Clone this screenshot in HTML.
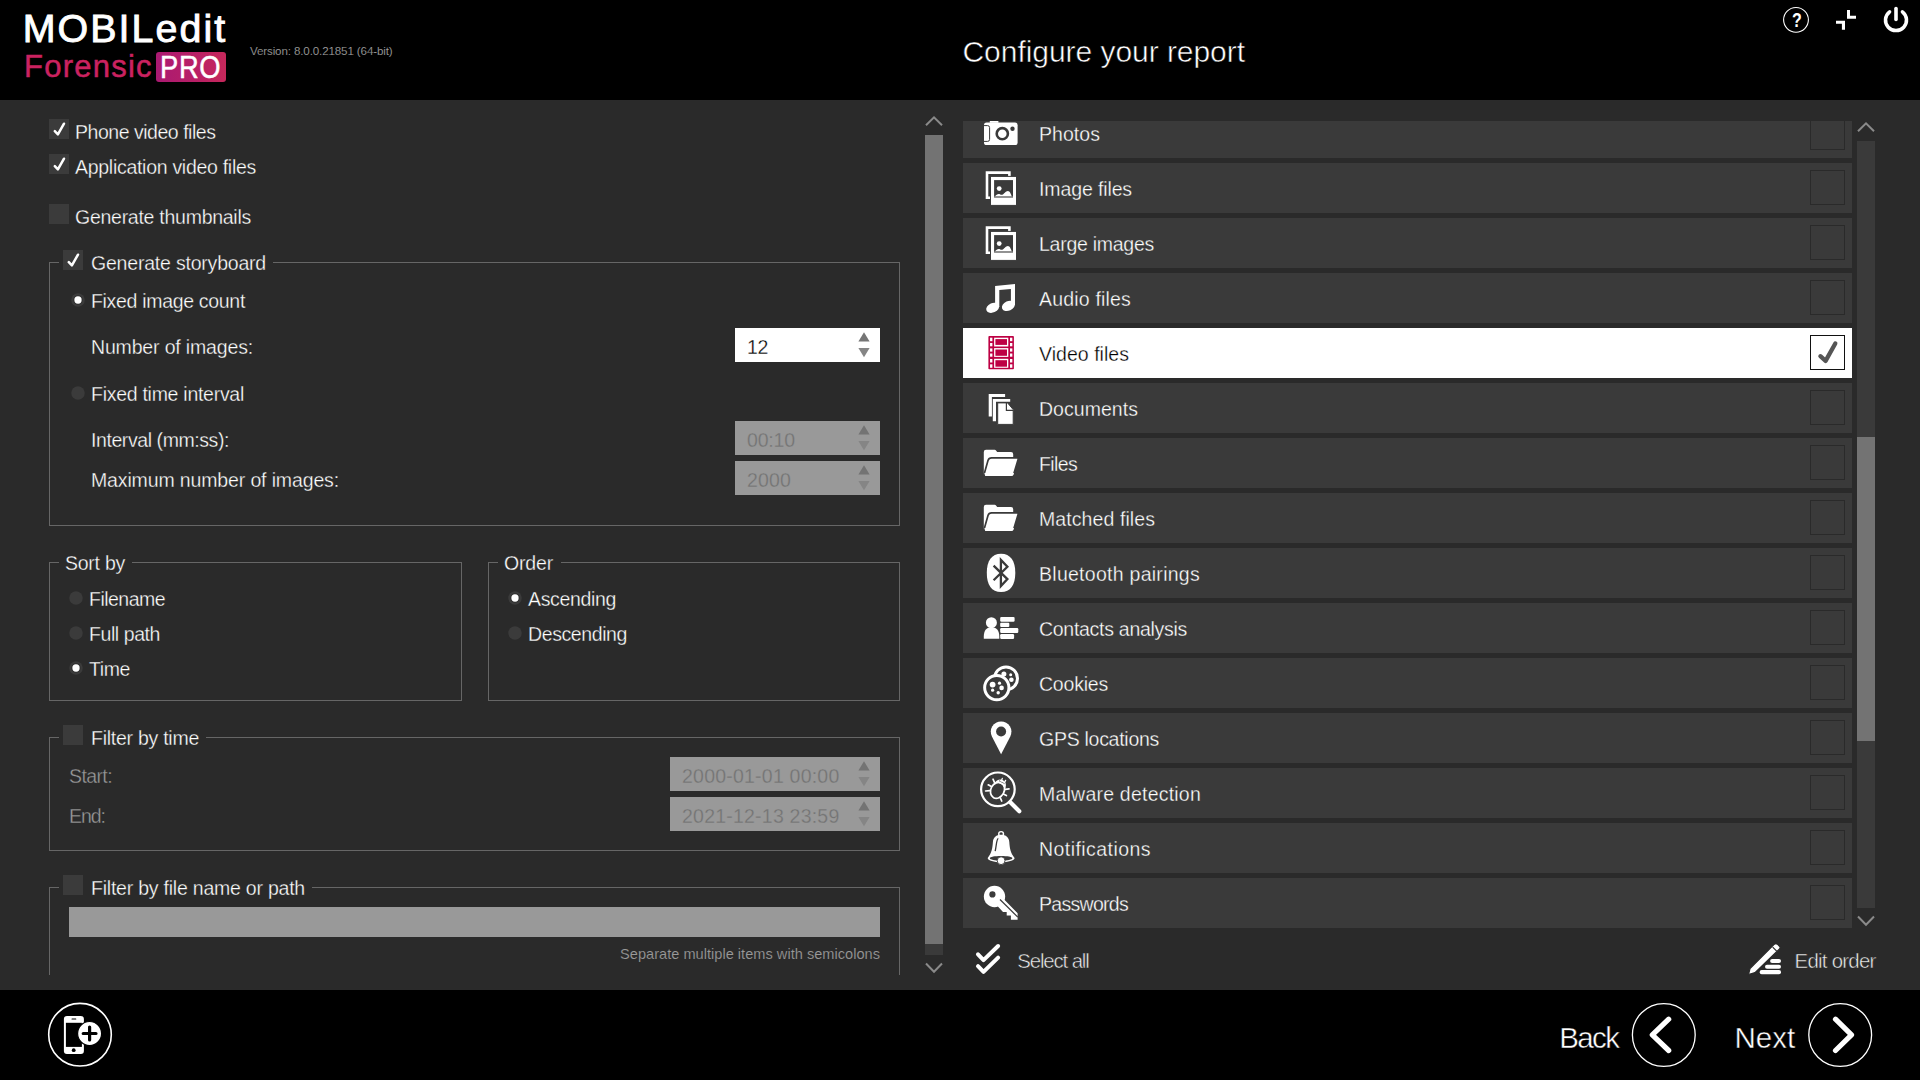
<!DOCTYPE html>
<html lang="en">
<head>
<meta charset="utf-8">
<title>MOBILedit Forensic PRO - Configure your report</title>
<style>
html,body{margin:0;padding:0;}
body{width:1920px;height:1080px;overflow:hidden;background:#2a2a2a;position:relative;font-family:"Liberation Sans",sans-serif;}
.a{position:absolute;}
.t{position:absolute;white-space:nowrap;font-family:"Liberation Sans",sans-serif;}
.hdr{left:0;top:0;width:1920px;height:100px;background:#000;}
.ftr{left:0;top:990px;width:1920px;height:90px;background:#000;}
.cb{width:20px;height:20px;background:#3b3b3b;}
.grp{border:1px solid #666;box-sizing:border-box;}
.gap{background:#2a2a2a;height:3px;}
.sp{background:#fff;}
.sp.dis{background:#999;}
.row{left:963px;width:889px;height:50px;background:#3a3a3a;}
.row.sel{background:#fff;}
.rcb{left:1810px;width:35px;height:35px;box-sizing:border-box;border:1px solid #2a2a2a;}
.rcb.sel{border-color:#111;}
svg{position:absolute;overflow:visible;}
</style>
</head>
<body>
<div class="a hdr"></div>
<div class="a ftr"></div>
<div class="a cb" style="left:49px;top:119px;"></div>
<svg style="left:49px;top:119px" width="20" height="20" viewBox="0 0 20 20"><path d="M5.8 12.2 L8.9 15.4 L15 4.7" fill="none" stroke="#fff" stroke-width="2.5" stroke-linecap="round" stroke-linejoin="round"/></svg>
<div class="a cb" style="left:49px;top:154px;"></div>
<svg style="left:49px;top:154px" width="20" height="20" viewBox="0 0 20 20"><path d="M5.8 12.2 L8.9 15.4 L15 4.7" fill="none" stroke="#fff" stroke-width="2.5" stroke-linecap="round" stroke-linejoin="round"/></svg>
<div class="a cb" style="left:49px;top:204px;"></div>
<div class="a grp" style="left:49px;top:262px;width:851px;height:264px;"></div>
<div class="a gap" style="left:59px;top:261px;width:214px;"></div>
<div class="a cb" style="left:63px;top:250px;"></div>
<svg style="left:63px;top:250px" width="20" height="20" viewBox="0 0 20 20"><path d="M5.8 12.2 L8.9 15.4 L15 4.7" fill="none" stroke="#fff" stroke-width="2.5" stroke-linecap="round" stroke-linejoin="round"/></svg>
<svg style="left:70px;top:292px" width="16" height="16" viewBox="0 0 16 16"><circle cx="8" cy="8" r="6.75" fill="#3b3b3b"/><circle cx="8" cy="8" r="4.7" fill="#303030"/><circle cx="8" cy="8" r="3.65" fill="#fff"/></svg>
<svg style="left:70px;top:385px" width="16" height="16" viewBox="0 0 16 16"><circle cx="8" cy="8" r="6.75" fill="#3b3b3b"/></svg>
<div class="a sp" style="left:735px;top:328px;width:145px;height:34px;"></div>
<svg style="left:858.4px;top:332px" width="12" height="26" viewBox="0 0 12 26"><path d="M6 0.2 L11.6 9.6 L0.4 9.6 Z" fill="#757575"/><path d="M0.4 15.9 L11.6 15.9 L6 25.3 Z" fill="#858585"/></svg>
<div class="a sp dis" style="left:735px;top:421px;width:145px;height:34px;"></div>
<svg style="left:858.4px;top:425px" width="12" height="26" viewBox="0 0 12 26"><path d="M6 0.2 L11.6 9.6 L0.4 9.6 Z" fill="#737373"/><path d="M0.4 15.9 L11.6 15.9 L6 25.3 Z" fill="#858585"/></svg>
<div class="a sp dis" style="left:735px;top:461px;width:145px;height:34px;"></div>
<svg style="left:858.4px;top:465px" width="12" height="26" viewBox="0 0 12 26"><path d="M6 0.2 L11.6 9.6 L0.4 9.6 Z" fill="#737373"/><path d="M0.4 15.9 L11.6 15.9 L6 25.3 Z" fill="#858585"/></svg>
<div class="a grp" style="left:49px;top:562px;width:413px;height:139px;"></div>
<div class="a gap" style="left:59px;top:561px;width:73px;"></div>
<svg style="left:68px;top:590px" width="16" height="16" viewBox="0 0 16 16"><circle cx="8" cy="8" r="6.75" fill="#3b3b3b"/></svg>
<svg style="left:68px;top:625px" width="16" height="16" viewBox="0 0 16 16"><circle cx="8" cy="8" r="6.75" fill="#3b3b3b"/></svg>
<svg style="left:68px;top:660px" width="16" height="16" viewBox="0 0 16 16"><circle cx="8" cy="8" r="6.75" fill="#3b3b3b"/><circle cx="8" cy="8" r="4.7" fill="#303030"/><circle cx="8" cy="8" r="3.65" fill="#fff"/></svg>
<div class="a grp" style="left:488px;top:562px;width:412px;height:139px;"></div>
<div class="a gap" style="left:498px;top:561px;width:63px;"></div>
<svg style="left:507px;top:590px" width="16" height="16" viewBox="0 0 16 16"><circle cx="8" cy="8" r="6.75" fill="#3b3b3b"/><circle cx="8" cy="8" r="4.7" fill="#303030"/><circle cx="8" cy="8" r="3.65" fill="#fff"/></svg>
<svg style="left:507px;top:625px" width="16" height="16" viewBox="0 0 16 16"><circle cx="8" cy="8" r="6.75" fill="#3b3b3b"/></svg>
<div class="a grp" style="left:49px;top:737px;width:851px;height:114px;"></div>
<div class="a gap" style="left:59px;top:736px;width:147px;"></div>
<div class="a cb" style="left:63px;top:725px;"></div>
<div class="a sp dis" style="left:670px;top:757px;width:210px;height:34px;"></div>
<svg style="left:858.4px;top:761px" width="12" height="26" viewBox="0 0 12 26"><path d="M6 0.2 L11.6 9.6 L0.4 9.6 Z" fill="#737373"/><path d="M0.4 15.9 L11.6 15.9 L6 25.3 Z" fill="#858585"/></svg>
<div class="a sp dis" style="left:670px;top:797px;width:210px;height:34px;"></div>
<svg style="left:858.4px;top:801px" width="12" height="26" viewBox="0 0 12 26"><path d="M6 0.2 L11.6 9.6 L0.4 9.6 Z" fill="#737373"/><path d="M0.4 15.9 L11.6 15.9 L6 25.3 Z" fill="#858585"/></svg>
<div class="a grp" style="left:49px;top:887px;width:851px;height:100px;border-bottom:none;height:88px;"></div>
<div class="a gap" style="left:59px;top:886px;width:253px;"></div>
<div class="a cb" style="left:63px;top:875px;"></div>
<div class="a sp dis" style="left:69px;top:907px;width:811px;height:30px;"></div>
<div class="a " style="left:925px;top:135px;width:18px;height:820px;background:#3a3a3a;"></div>
<div class="a " style="left:925px;top:135px;width:18px;height:809px;background:#737373;"></div>
<svg style="left:925px;top:116px" width="18" height="10" viewBox="0 0 18 10"><path d="M1 9.3 L9 1.3 L17 9.3" fill="none" stroke="#8a8a8a" stroke-width="2"/></svg>
<svg style="left:925px;top:962px" width="18" height="10" viewBox="0 0 18 10"><path d="M1 1.5 L9 9.7 L17 1.5" fill="none" stroke="#8a8a8a" stroke-width="2"/></svg>
<div class="a" style="left:963px;top:121px;width:889px;height:807px;overflow:hidden;">
<div class="a row" style="left:0;top:-13px"></div>
<div class="a rcb" style="left:847px;top:-6px"></div>
<div class="a row" style="left:0;top:42px"></div>
<div class="a rcb" style="left:847px;top:49px"></div>
<div class="a row" style="left:0;top:97px"></div>
<div class="a rcb" style="left:847px;top:104px"></div>
<div class="a row" style="left:0;top:152px"></div>
<div class="a rcb" style="left:847px;top:159px"></div>
<div class="a row sel" style="left:0;top:207px"></div>
<div class="a rcb sel" style="left:847px;top:214px"></div>
<div class="a row" style="left:0;top:262px"></div>
<div class="a rcb" style="left:847px;top:269px"></div>
<div class="a row" style="left:0;top:317px"></div>
<div class="a rcb" style="left:847px;top:324px"></div>
<div class="a row" style="left:0;top:372px"></div>
<div class="a rcb" style="left:847px;top:379px"></div>
<div class="a row" style="left:0;top:427px"></div>
<div class="a rcb" style="left:847px;top:434px"></div>
<div class="a row" style="left:0;top:482px"></div>
<div class="a rcb" style="left:847px;top:489px"></div>
<div class="a row" style="left:0;top:537px"></div>
<div class="a rcb" style="left:847px;top:544px"></div>
<div class="a row" style="left:0;top:592px"></div>
<div class="a rcb" style="left:847px;top:599px"></div>
<div class="a row" style="left:0;top:647px"></div>
<div class="a rcb" style="left:847px;top:654px"></div>
<div class="a row" style="left:0;top:702px"></div>
<div class="a rcb" style="left:847px;top:709px"></div>
<div class="a row" style="left:0;top:757px"></div>
<div class="a rcb" style="left:847px;top:764px"></div>
<svg style="left:9px;top:-13px" width="60" height="50" viewBox="0 0 60 50"><path d="M17.8 12.4 h8.6 v2.4 h-8.6z" fill="#fff"/>
<rect x="12" y="14.6" width="33.6" height="22.4" rx="2.6" fill="#fff"/>
<rect x="9" y="17.6" width="8.6" height="15.8" rx="2" fill="#fff" stroke="#3a3a3a" stroke-width="1"/>
<rect x="8" y="14.6" width="4" height="22.4" fill="#3a3a3a"/>
<circle cx="30.3" cy="25.7" r="5.6" fill="none" stroke="#3a3a3a" stroke-width="2.6"/>
<circle cx="40.5" cy="20.8" r="2.2" fill="#3a3a3a"/></svg>
<svg style="left:9px;top:42px" width="60" height="50" viewBox="0 0 60 50"><path d="M15 9.6 H37.4 V14 M15 9.6 V34.8 H19" fill="none" stroke="#fff" stroke-width="2.6" stroke-linecap="square"/>
<rect x="18.5" y="13.4" width="26" height="29" fill="#fff" stroke="#3a3a3a" stroke-width="1"/>
<rect x="22.1" y="17.1" width="18.9" height="17.4" fill="#3a3a3a"/>
<circle cx="27.2" cy="25.6" r="2.4" fill="#fff"/>
<path d="M22.9 33.4 C24 32 25.3 31 26.6 31 C28 31 29 32 30.2 31.7 C32 31.2 33.6 28 35.9 28 C37.8 28 39 31 39.8 33.4 Z" fill="#fff"/>
<rect x="22.1" y="33.4" width="18.9" height="1.1" fill="#8a8a8a"/></svg>
<svg style="left:9px;top:97px" width="60" height="50" viewBox="0 0 60 50"><path d="M15 9.6 H37.4 V14 M15 9.6 V34.8 H19" fill="none" stroke="#fff" stroke-width="2.6" stroke-linecap="square"/>
<rect x="18.5" y="13.4" width="26" height="29" fill="#fff" stroke="#3a3a3a" stroke-width="1"/>
<rect x="22.1" y="17.1" width="18.9" height="17.4" fill="#3a3a3a"/>
<circle cx="27.2" cy="25.6" r="2.4" fill="#fff"/>
<path d="M22.9 33.4 C24 32 25.3 31 26.6 31 C28 31 29 32 30.2 31.7 C32 31.2 33.6 28 35.9 28 C37.8 28 39 31 39.8 33.4 Z" fill="#fff"/>
<rect x="22.1" y="33.4" width="18.9" height="1.1" fill="#8a8a8a"/></svg>
<svg style="left:9px;top:152px" width="60" height="50" viewBox="0 0 60 50"><path d="M23.1 13 L43 10.9 V32 H38.9 V16 L27.3 17.1 V34 H23.1 Z" fill="#fff"/>
<ellipse cx="20.7" cy="34.8" rx="6.8" ry="4.7" transform="rotate(-24 20.7 34.8)" fill="#fff"/>
<ellipse cx="36.4" cy="32.9" rx="6.8" ry="4.7" transform="rotate(-24 36.4 32.9)" fill="#fff"/></svg>
<svg style="left:9px;top:207px" width="60" height="50" viewBox="0 0 60 50"><rect x="16.4" y="8.1" width="25.5" height="33.1" rx="0.8" fill="#bd0043"/><rect x="18.05" y="9.7" width="2.35" height="3.50" fill="#fff"/><rect x="38" y="9.7" width="2.35" height="3.50" fill="#fff"/><rect x="18.05" y="15" width="2.35" height="3.30" fill="#fff"/><rect x="38" y="15" width="2.35" height="3.30" fill="#fff"/><rect x="18.05" y="20.4" width="2.35" height="3.20" fill="#fff"/><rect x="38" y="20.4" width="2.35" height="3.20" fill="#fff"/><rect x="18.05" y="25.5" width="2.35" height="3.20" fill="#fff"/><rect x="38" y="25.5" width="2.35" height="3.20" fill="#fff"/><rect x="18.05" y="31" width="2.35" height="3.50" fill="#fff"/><rect x="38" y="31" width="2.35" height="3.50" fill="#fff"/><rect x="18.05" y="36.3" width="2.35" height="3.50" fill="#fff"/><rect x="38" y="36.3" width="2.35" height="3.50" fill="#fff"/><rect x="22.1" y="9.7" width="14.2" height="8.80" fill="#fff"/><rect x="23.4" y="11.1" width="11.6" height="5.80" fill="#bd0043"/><rect x="22.1" y="20.1" width="14.2" height="8.80" fill="#fff"/><rect x="23.4" y="21.5" width="11.6" height="6.30" fill="#bd0043"/><rect x="22.1" y="30.8" width="14.2" height="9.00" fill="#fff"/><rect x="23.4" y="32.2" width="11.6" height="6.50" fill="#bd0043"/></svg>
<svg style="left:9px;top:262px" width="60" height="50" viewBox="0 0 60 50"><path d="M16.7 11.1 H33.1 V13.9 H19.9 V33.6 H16.7 Z" fill="#fff"/>
<path d="M20.8 16 H38.2 V18.75 H24 V38.2 H20.8 Z" fill="#fff"/>
<path d="M25.7 19.9 H35.6 L41.2 26.6 V41.4 H25.7 Z" fill="#fff" stroke="#3a3a3a" stroke-width="1"/>
<path d="M34.4 19.9 V27.4 H41.2" fill="none" stroke="#3a3a3a" stroke-width="1.2"/></svg>
<svg style="left:9px;top:317px" width="60" height="50" viewBox="0 0 60 50"><path d="M11.8 36 V14 Q11.8 11.8 14 11.8 H22.6 Q23.6 11.8 24.2 12.8 L25.2 14.1 H39 Q41.2 14.1 41.2 16.3 V20 H18 L13 38 Q11.8 38 11.8 36 Z" fill="#fff"/>
<path d="M19.6 19.9 H45 Q46.6 19.9 46.1 21.4 L41.6 36.4 Q41.1 38 39.4 38 H13.6 Q11.6 38 12.1 36.2 L16 22.4 Q16.8 19.9 19.6 19.9 Z" fill="#fff" stroke="#3a3a3a" stroke-width="1.7"/>
<path d="M13.2 38 H39.4 Q41.1 38 41.6 36.4 L42 35 H12.4 Z" fill="#fff"/></svg>
<svg style="left:9px;top:372px" width="60" height="50" viewBox="0 0 60 50"><path d="M11.8 36 V14 Q11.8 11.8 14 11.8 H22.6 Q23.6 11.8 24.2 12.8 L25.2 14.1 H39 Q41.2 14.1 41.2 16.3 V20 H18 L13 38 Q11.8 38 11.8 36 Z" fill="#fff"/>
<path d="M19.6 19.9 H45 Q46.6 19.9 46.1 21.4 L41.6 36.4 Q41.1 38 39.4 38 H13.6 Q11.6 38 12.1 36.2 L16 22.4 Q16.8 19.9 19.6 19.9 Z" fill="#fff" stroke="#3a3a3a" stroke-width="1.7"/>
<path d="M13.2 38 H39.4 Q41.1 38 41.6 36.4 L42 35 H12.4 Z" fill="#fff"/></svg>
<svg style="left:9px;top:427px" width="60" height="50" viewBox="0 0 60 50"><path d="M29.05 5.8 C38.5 5.8 43.3 13 43.3 24.9 C43.3 36.8 38.5 44 29.05 44 C19.6 44 14.8 36.8 14.8 24.9 C14.8 13 19.6 5.8 29.05 5.8 Z" fill="#fff"/>
<path d="M21.6 17.6 L35.4 31.1 L28.9 38 V11.9 L35.4 18.7 L21.6 32.2" fill="none" stroke="#3a3a3a" stroke-width="2.3" stroke-linejoin="miter"/></svg>
<svg style="left:9px;top:482px" width="60" height="50" viewBox="0 0 60 50"><circle cx="19.4" cy="19.7" r="5.5" fill="#fff"/>
<path d="M11.8 35.7 V33.4 C11.8 27.4 14.8 24.3 19.5 24.3 C24.3 24.3 27.3 27.4 27.3 33.4 V35.7 Z" fill="#fff"/>
<rect x="28.2" y="13.9" width="14.4" height="4.85" rx="1.2" fill="#fff"/>
<rect x="28.2" y="19.7" width="9.1" height="4.3" rx="1" fill="#fff"/>
<rect x="28.2" y="25" width="18.1" height="4.9" rx="1.2" fill="#fff"/>
<rect x="28.2" y="31" width="13.9" height="4.9" rx="1.2" fill="#fff"/></svg>
<svg style="left:9px;top:537px" width="60" height="50" viewBox="0 0 60 50"><circle cx="34" cy="20.4" r="11.5" fill="#3a3a3a" stroke="#fff" stroke-width="3"/>
<circle cx="31.9" cy="16" r="2.5" fill="#fff"/><circle cx="38.7" cy="16.7" r="1.5" fill="#fff"/><circle cx="39.4" cy="21.8" r="2.3" fill="#fff"/>
<circle cx="24.8" cy="29.6" r="12.15" fill="#3a3a3a" stroke="#fff" stroke-width="3"/>
<circle cx="20.6" cy="26.6" r="2.9" fill="#fff"/><circle cx="27.5" cy="25.2" r="1.6" fill="#fff"/><circle cx="29.6" cy="29.9" r="2.3" fill="#fff"/>
<circle cx="20.6" cy="32.2" r="1.6" fill="#fff"/><circle cx="26.2" cy="34.7" r="1.7" fill="#fff"/></svg>
<svg style="left:9px;top:592px" width="60" height="50" viewBox="0 0 60 50"><path d="M29.1 41.2 L19.9 23.4 A10.3 10.3 0 1 1 38.3 23.4 Z" fill="#fff"/>
<circle cx="29.1" cy="18.5" r="5" fill="#3a3a3a"/></svg>
<svg style="left:9px;top:647px" width="60" height="50" viewBox="0 0 60 50"><circle cx="25.9" cy="21.3" r="16.8" fill="none" stroke="#fff" stroke-width="2.2"/>
<path d="M38.3 34.2 L47.3 43.2" stroke="#fff" stroke-width="4.2" stroke-linecap="round" fill="none"/>
<ellipse cx="25.5" cy="22.3" rx="6.7" ry="8.3" transform="rotate(28 25.5 22.3)" fill="none" stroke="#fff" stroke-width="1.7"/>
<g transform="rotate(28 25.5 22.3)"><path d="M19.6 17.9 C19.2 8.4 31.8 8.4 31.4 17.9 C28.6 14.4 22.4 14.4 19.6 17.9 Z" fill="#fff"/><path d="M22.4 13.1 H28.6" stroke="#3a3a3a" stroke-width="0.8" stroke-dasharray="1.7 0.7" fill="none"/></g>
<path d="M22.6 14.6 L21 11.2 M19.4 18.6 L16.2 16.8 M17.8 22.6 L13.6 23 M33.4 21.4 L37 20.9 M31.8 26.2 L34.4 27.5 M28.4 30 L29.7 33" stroke="#fff" stroke-width="1.7" stroke-linecap="round" fill="none"/>
<path d="M29.4 13 L30.3 10.4 M32.4 14.6 L33.6 12.4" stroke="#fff" stroke-width="1.3" stroke-linecap="round" fill="none"/></svg>
<svg style="left:9px;top:702px" width="60" height="50" viewBox="0 0 60 50"><circle cx="29.1" cy="11" r="2.4" fill="#3a3a3a" stroke="#fff" stroke-width="1.4"/>
<path d="M29.1 11.8 C34 11.8 37 14.5 37.3 19 C37.6 24.5 38.4 30 42.6 35 C42.6 37.6 36 39.2 29.1 39.2 C22.2 39.2 15.6 37.6 15.7 35 C19.8 30 20.6 24.5 20.9 19 C21.2 14.5 24.2 11.8 29.1 11.8 Z" fill="#fff"/>
<path d="M17.8 35.2 C17.8 33.8 23 33 29.1 33 C35.2 33 40.4 33.8 40.4 35.2 C40.4 36.6 35.2 37.6 29.1 37.6 C23 37.6 17.8 36.6 17.8 35.2 Z" fill="#3a3a3a"/>
<circle cx="29.1" cy="37.7" r="3.9" fill="#fff" stroke="#3a3a3a" stroke-width="0.9"/>
<path d="M26.3 15.3 C24.6 15.8 24.6 21 23.2 28.2" fill="none" stroke="#3a3a3a" stroke-width="1.3"/></svg>
<svg style="left:9px;top:757px" width="60" height="50" viewBox="0 0 60 50"><circle cx="22.5" cy="18.5" r="10.65" fill="#fff"/>
<path d="M25.7 28.2 L31 34 H34.7 V37.5 H38.9 V41.7 H45.6 V35.2 L32.4 21.8 Z" fill="#fff"/>
<circle cx="20.4" cy="16.4" r="3.1" fill="#3a3a3a"/>
<path d="M28 21.5 L45.8 39.1" stroke="#3a3a3a" stroke-width="1.3" fill="none"/></svg>
</div>
<div class="a " style="left:1857px;top:141px;width:18px;height:767px;background:#3a3a3a;"></div>
<div class="a " style="left:1857px;top:437px;width:18px;height:304px;background:#737373;"></div>
<svg style="left:1857px;top:122.3px" width="18" height="10" viewBox="0 0 18 10"><path d="M1 9.3 L9 1.3 L17 9.3" fill="none" stroke="#8a8a8a" stroke-width="2"/></svg>
<svg style="left:1857px;top:914.9px" width="18" height="10" viewBox="0 0 18 10"><path d="M1 1.5 L9 9.7 L17 1.5" fill="none" stroke="#8a8a8a" stroke-width="2"/></svg>
<svg style="left:1810px;top:335px" width="35" height="35" viewBox="0 0 35 35"><path d="M10.4 21.2 L15.6 25.9 L25.3 8.5" fill="none" stroke="#555" stroke-width="4.3" stroke-linecap="round" stroke-linejoin="round"/></svg>
<svg style="left:968px;top:936px" width="60" height="50" viewBox="0 0 60 50"><path d="M10 18.3 L15.5 24.1 L30.1 10 M10 30.2 L15.5 35.9 L30.1 21.6" fill="none" stroke="#fff" stroke-width="4" stroke-linecap="round" stroke-linejoin="round"/></svg>
<svg style="left:1740px;top:936px" width="60" height="50" viewBox="0 0 60 50">
<rect x="30.1" y="23.1" width="10.9" height="4" rx="2" fill="#fff"/><rect x="25" y="28.7" width="16" height="4" rx="2" fill="#fff"/><rect x="19.7" y="34.1" width="21.3" height="4.1" rx="2" fill="#fff"/>
<path d="M8.5 38.5 L10 32.6 L34.4 8.2 Q35.9 6.8 37.4 8.2 L39.5 10.3 Q40.8 11.6 39.5 12.9 L15 36.6 Z" fill="#fff" stroke="#2a2a2a" stroke-width="1.2"/>
<path d="M32.7 11.2 L36.7 15.2" stroke="#2a2a2a" stroke-width="1.2" fill="none"/>
</svg>
<svg style="left:1770px;top:0px" width="150" height="45" viewBox="0 0 150 45">
<circle cx="26" cy="19.85" r="12.4" fill="none" stroke="#fff" stroke-width="1.1"/>
<path d="M77 10 h3 v5.7 h6 v3.05 h-9 z" fill="#fff"/>
<path d="M66 20.7 h9 v9.1 h-3.1 v-6 h-5.9 z" fill="#fff"/>
<path d="M119.6 11.8 A10.5 10.5 0 1 0 132.4 11.8" fill="none" stroke="#fff" stroke-width="3.5" stroke-linecap="round"/>
<path d="M126 8.6 V19.4" stroke="#fff" stroke-width="3.6" stroke-linecap="round" fill="none"/>
</svg>
<svg style="left:40px;top:995px" width="80" height="80" viewBox="0 0 80 80">
<circle cx="40" cy="39.7" r="31.3" fill="none" stroke="#fff" stroke-width="1.6"/>
<rect x="23.9" y="21" width="20" height="37.9" rx="3" fill="#fff"/>
<rect x="25.9" y="27.8" width="16" height="24.1" fill="#000"/>
<rect x="31.5" y="23.6" width="4.8" height="1" rx="0.5" fill="#000"/>
<circle cx="33.7" cy="55.2" r="1.9" fill="#000"/>
<circle cx="49.6" cy="38.5" r="12" fill="#fff" stroke="#000" stroke-width="1.2"/>
<path d="M43.2 38.5 H56 M49.6 32.1 V44.9" stroke="#000" stroke-width="3.2" stroke-linecap="round" fill="none"/>
</svg>
<svg style="left:1620px;top:995px" width="260" height="80" viewBox="0 0 260 80">
<circle cx="43.8" cy="40" r="31.4" fill="none" stroke="#fff" stroke-width="1.3"/>
<path d="M48.7 24.2 L32.3 39.85 L48.7 55.5" fill="none" stroke="#fff" stroke-width="5.2" stroke-linecap="round" stroke-linejoin="round"/>
<circle cx="220.2" cy="40" r="31.4" fill="none" stroke="#fff" stroke-width="1.3"/>
<path d="M215.5 24.2 L231.5 39.85 L215.5 55.5" fill="none" stroke="#fff" stroke-width="5.2" stroke-linecap="round" stroke-linejoin="round"/>
</svg>
<div class="a" style="left:156px;top:52px;width:70px;height:30px;border-radius:3px;background:linear-gradient(90deg,#aa1a72 0%,#b81f66 55%,#c6285b 100%);"></div>
<div class="t" style="left:75.0px;top:119.74px;font-size:19.5px;line-height:25px;color:#fff;letter-spacing:-0.472px;-webkit-text-stroke:0.3px #2a2a2a;">Phone video files</div>
<div class="t" style="left:75.0px;top:154.74px;font-size:19.5px;line-height:25px;color:#fff;letter-spacing:-0.284px;-webkit-text-stroke:0.3px #2a2a2a;">Application video files</div>
<div class="t" style="left:75.0px;top:204.74px;font-size:19.5px;line-height:25px;color:#fff;letter-spacing:-0.265px;-webkit-text-stroke:0.3px #2a2a2a;">Generate thumbnails</div>
<div class="t" style="left:91.0px;top:250.74px;font-size:19.5px;line-height:25px;color:#fff;letter-spacing:-0.203px;-webkit-text-stroke:0.3px #2a2a2a;">Generate storyboard</div>
<div class="t" style="left:91.0px;top:288.74px;font-size:19.5px;line-height:25px;color:#fff;letter-spacing:-0.314px;-webkit-text-stroke:0.3px #2a2a2a;">Fixed image count</div>
<div class="t" style="left:91.0px;top:334.74px;font-size:19.5px;line-height:25px;color:#fff;letter-spacing:-0.161px;-webkit-text-stroke:0.3px #2a2a2a;">Number of images:</div>
<div class="t" style="left:91.0px;top:381.74px;font-size:19.5px;line-height:25px;color:#fff;letter-spacing:-0.275px;-webkit-text-stroke:0.3px #2a2a2a;">Fixed time interval</div>
<div class="t" style="left:91.0px;top:427.74px;font-size:19.5px;line-height:25px;color:#fff;letter-spacing:-0.423px;-webkit-text-stroke:0.3px #2a2a2a;">Interval (mm:ss):</div>
<div class="t" style="left:91.0px;top:467.74px;font-size:19.5px;line-height:25px;color:#fff;letter-spacing:-0.137px;-webkit-text-stroke:0.3px #2a2a2a;">Maximum number of images:</div>
<div class="t" style="left:747.0px;top:334.74px;font-size:19.5px;line-height:25px;color:#000;letter-spacing:-0.352px;-webkit-text-stroke:0.3px #fff;">12</div>
<div class="t" style="left:747.0px;top:427.74px;font-size:19.5px;line-height:25px;color:#747474;letter-spacing:-0.163px;-webkit-text-stroke:0.3px #999;">00:10</div>
<div class="t" style="left:747.0px;top:467.74px;font-size:19.5px;line-height:25px;color:#747474;letter-spacing:0.152px;-webkit-text-stroke:0.3px #999;">2000</div>
<div class="t" style="left:65.0px;top:550.74px;font-size:19.5px;line-height:25px;color:#fff;letter-spacing:-0.254px;-webkit-text-stroke:0.3px #2a2a2a;">Sort by</div>
<div class="t" style="left:89.0px;top:586.74px;font-size:19.5px;line-height:25px;color:#fff;letter-spacing:-0.525px;-webkit-text-stroke:0.3px #2a2a2a;">Filename</div>
<div class="t" style="left:89.0px;top:621.74px;font-size:19.5px;line-height:25px;color:#fff;letter-spacing:-0.422px;-webkit-text-stroke:0.3px #2a2a2a;">Full path</div>
<div class="t" style="left:89.0px;top:656.74px;font-size:19.5px;line-height:25px;color:#fff;letter-spacing:-0.402px;-webkit-text-stroke:0.3px #2a2a2a;">Time</div>
<div class="t" style="left:504.0px;top:550.74px;font-size:19.5px;line-height:25px;color:#fff;letter-spacing:-0.172px;-webkit-text-stroke:0.3px #2a2a2a;">Order</div>
<div class="t" style="left:528.0px;top:586.74px;font-size:19.5px;line-height:25px;color:#fff;letter-spacing:-0.342px;-webkit-text-stroke:0.3px #2a2a2a;">Ascending</div>
<div class="t" style="left:528.0px;top:621.74px;font-size:19.5px;line-height:25px;color:#fff;letter-spacing:-0.398px;-webkit-text-stroke:0.3px #2a2a2a;">Descending</div>
<div class="t" style="left:91.0px;top:725.74px;font-size:19.5px;line-height:25px;color:#fff;letter-spacing:-0.258px;-webkit-text-stroke:0.3px #2a2a2a;">Filter by time</div>
<div class="t" style="left:69.0px;top:763.74px;font-size:19.5px;line-height:25px;color:#999;letter-spacing:-0.602px;-webkit-text-stroke:0.3px #2a2a2a;">Start:</div>
<div class="t" style="left:69.0px;top:803.74px;font-size:19.5px;line-height:25px;color:#999;letter-spacing:-1.031px;-webkit-text-stroke:0.3px #2a2a2a;">End:</div>
<div class="t" style="left:682.0px;top:763.74px;font-size:19.5px;line-height:25px;color:#747474;letter-spacing:0.221px;-webkit-text-stroke:0.3px #999;">2000-01-01 00:00</div>
<div class="t" style="left:682.0px;top:803.74px;font-size:19.5px;line-height:25px;color:#747474;letter-spacing:0.221px;-webkit-text-stroke:0.3px #999;">2021-12-13 23:59</div>
<div class="t" style="left:91.0px;top:875.74px;font-size:19.5px;line-height:25px;color:#fff;letter-spacing:-0.223px;-webkit-text-stroke:0.3px #2a2a2a;">Filter by file name or path</div>
<div class="t" style="right:1040.0px;top:944.94px;font-size:14.6px;line-height:19px;color:#999;letter-spacing:0.011px;-webkit-text-stroke:0.15px #2a2a2a;">Separate multiple items with semicolons</div>
<div class="t" style="left:1039.0px;top:121.74px;font-size:19.5px;line-height:25px;color:#fff;letter-spacing:0.047px;-webkit-text-stroke:0.3px #3a3a3a;">Photos</div>
<div class="t" style="left:1039.0px;top:176.74px;font-size:19.5px;line-height:25px;color:#fff;letter-spacing:-0.118px;-webkit-text-stroke:0.3px #3a3a3a;">Image files</div>
<div class="t" style="left:1039.0px;top:231.74px;font-size:19.5px;line-height:25px;color:#fff;letter-spacing:-0.263px;-webkit-text-stroke:0.3px #3a3a3a;">Large images</div>
<div class="t" style="left:1039.0px;top:286.74px;font-size:19.5px;line-height:25px;color:#fff;letter-spacing:0.185px;-webkit-text-stroke:0.3px #3a3a3a;">Audio files</div>
<div class="t" style="left:1039.0px;top:341.74px;font-size:19.5px;line-height:25px;color:#000;letter-spacing:0.034px;-webkit-text-stroke:0.3px #fff;">Video files</div>
<div class="t" style="left:1039.0px;top:396.74px;font-size:19.5px;line-height:25px;color:#fff;letter-spacing:0.042px;-webkit-text-stroke:0.3px #3a3a3a;">Documents</div>
<div class="t" style="left:1039.0px;top:451.74px;font-size:19.5px;line-height:25px;color:#fff;letter-spacing:-0.634px;-webkit-text-stroke:0.3px #3a3a3a;">Files</div>
<div class="t" style="left:1039.0px;top:506.74px;font-size:19.5px;line-height:25px;color:#fff;letter-spacing:0.085px;-webkit-text-stroke:0.3px #3a3a3a;">Matched files</div>
<div class="t" style="left:1039.0px;top:561.74px;font-size:19.5px;line-height:25px;color:#fff;letter-spacing:0.272px;-webkit-text-stroke:0.3px #3a3a3a;">Bluetooth pairings</div>
<div class="t" style="left:1039.0px;top:616.74px;font-size:19.5px;line-height:25px;color:#fff;letter-spacing:-0.284px;-webkit-text-stroke:0.3px #3a3a3a;">Contacts analysis</div>
<div class="t" style="left:1039.0px;top:671.74px;font-size:19.5px;line-height:25px;color:#fff;letter-spacing:-0.208px;-webkit-text-stroke:0.3px #3a3a3a;">Cookies</div>
<div class="t" style="left:1039.0px;top:726.74px;font-size:19.5px;line-height:25px;color:#fff;letter-spacing:-0.274px;-webkit-text-stroke:0.3px #3a3a3a;">GPS locations</div>
<div class="t" style="left:1039.0px;top:781.74px;font-size:19.5px;line-height:25px;color:#fff;letter-spacing:0.221px;-webkit-text-stroke:0.3px #3a3a3a;">Malware detection</div>
<div class="t" style="left:1039.0px;top:836.74px;font-size:19.5px;line-height:25px;color:#fff;letter-spacing:0.445px;-webkit-text-stroke:0.3px #3a3a3a;">Notifications</div>
<div class="t" style="left:1039.0px;top:891.74px;font-size:19.5px;line-height:25px;color:#fff;letter-spacing:-0.708px;-webkit-text-stroke:0.3px #3a3a3a;">Passwords</div>
<div class="t" style="left:1017.2px;top:947.73px;font-size:20.4px;line-height:27px;color:#f0f0f0;letter-spacing:-1.125px;-webkit-text-stroke:0.5px #2a2a2a;">Select all</div>
<div class="t" style="left:1794.6px;top:947.73px;font-size:20.4px;line-height:27px;color:#f0f0f0;letter-spacing:-0.741px;-webkit-text-stroke:0.5px #2a2a2a;">Edit order</div>
<div class="t" style="left:962.5px;top:32.11px;font-size:30px;line-height:39px;color:#fff;letter-spacing:-0.047px;-webkit-text-stroke:0.55px #000;">Configure your report</div>
<div class="t" style="left:250.0px;top:43.28px;font-size:11.6px;line-height:15px;color:#9c9c9c;letter-spacing:-0.131px;-webkit-text-stroke:0.1px #000;">Version: 8.0.0.21851 (64-bit)</div>
<div class="t" style="left:22.7px;top:2.85px;font-size:39.4px;line-height:51px;color:#fff;letter-spacing:2.056px;-webkit-text-stroke:0.9px #fff;">MOBILedit</div>
<div class="t" style="left:24.0px;top:47.16px;font-size:31px;line-height:40px;color:#cb2260;letter-spacing:1.241px;-webkit-text-stroke:0.5px #cb2260;">Forensic</div>
<div class="t" style="left:160.1px;top:46.72px;font-size:31.4px;line-height:41px;color:#fff;letter-spacing:0.810px;transform:scale(0.87,1);transform-origin:0 31.38px;-webkit-text-stroke:0.5px #fff;">PRO</div>
<div class="t" style="left:1791.8px;top:7.94px;font-size:19.5px;line-height:25px;color:#fff;font-weight:bold;transform:scaleX(.82);transform-origin:left center;">?</div>
<div class="t" style="left:1559.3px;top:1018.78px;font-size:29.5px;line-height:38px;color:#fff;letter-spacing:-1.648px;-webkit-text-stroke:0.45px #000;">Back</div>
<div class="t" style="left:1734.4px;top:1018.78px;font-size:29.5px;line-height:38px;color:#fff;letter-spacing:0.082px;-webkit-text-stroke:0.45px #000;">Next</div>
</body>
</html>
